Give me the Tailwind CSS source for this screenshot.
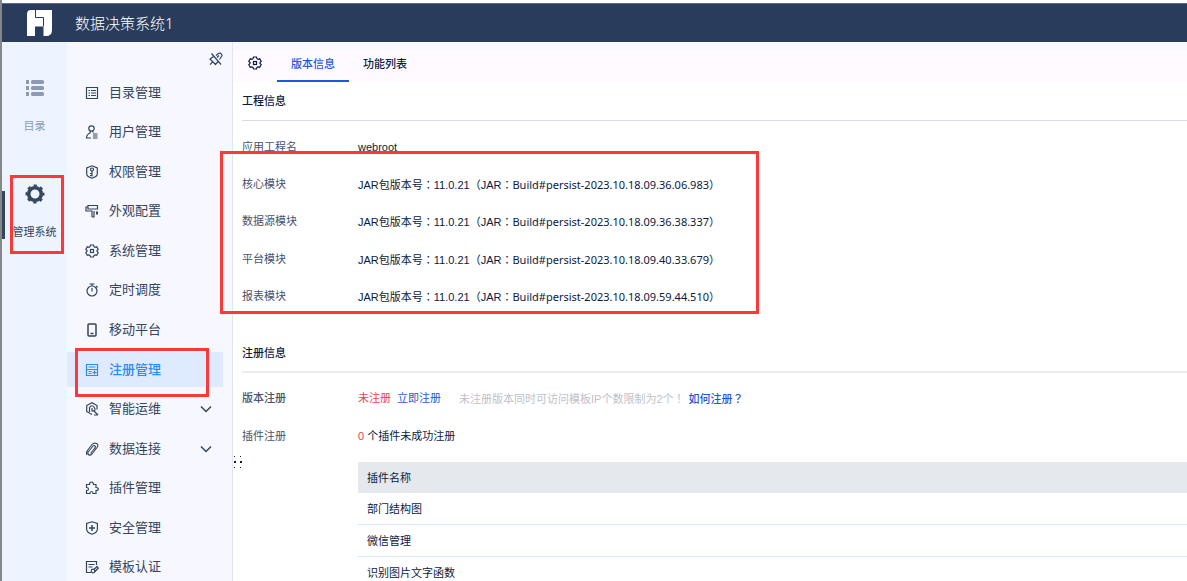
<!DOCTYPE html>
<html lang="zh-CN">
<head>
<meta charset="utf-8">
<meta name="viewport" content="width=device-width, initial-scale=1">
<title>数据决策系统</title>
<script src="https://cdn.jsdelivr.net/npm/@tailwindcss/browser@4"></script>
</head>
<body class="relative flex h-screen flex-col overflow-hidden border-l-2 border-[#85878b] bg-white font-['Liberation_Sans','Noto_Sans_CJK_SC',sans-serif] text-[11px] leading-4 text-[#0b1a40]">

<header class="mt-[3px] flex h-[39px] shrink-0 items-center gap-[21px] border-t border-[#5f6b80] bg-[#293c5b] pl-6 text-white">
  <svg class="h-7 w-7" viewBox="0 0 28 28" fill="#fff" aria-hidden="true">
    <path d="M5 1H9V9H17V17.500H5V27H1V5Q1 1 5 1Z"/><path d="M1 17H9V27H1Z"/><path d="M9 1H26V21Q26 27 20 27H17.500V8.500H9Z"/><path d="M9.500 1V8.500H17.500V17" fill="none" stroke="#293c5b"/>
  </svg>
  <h1 class="text-[15px] leading-5 font-light">数据决策系统<span class="font-['Noto_Sans']">1</span></h1>
</header>

<div class="flex min-h-0 flex-1">
  <nav aria-label="主导航" class="flex w-[65px] shrink-0 flex-col items-center bg-[#eef4ff] pt-9">
    <a href="#" class="flex flex-col items-center gap-5 text-[#8d9ab5]">
      <svg class="h-5 w-5" viewBox="0 0 20 20" fill="currentColor" aria-hidden="true"><path d="M1 2h3v4H1zM1 8h3v4H1zM1 14h3v4H1z"/><rect x="6" y="2" width="13" height="4" rx="1.500"/><rect x="6" y="8" width="13" height="4" rx="1.500"/><rect x="6" y="14" width="13" height="4" rx="1.500"/></svg>
      <span>目录</span>
    </a>
    <a href="#" aria-current="page" class="relative mt-[50px] flex w-full flex-col items-center gap-5 text-[#34475f]">
      <span class="absolute top-[7px] left-0 h-12 w-[3px] bg-[#34475f]"></span>
      <svg class="h-5 w-5" viewBox="0 0 20 20" aria-hidden="true"><circle cx="10" cy="10" r="6.300" fill="none" stroke="currentColor" stroke-width="3.600"/><circle cx="10" cy="10" r="8.500" fill="none" stroke="currentColor" stroke-width="2" stroke-dasharray="3.340 3.340" stroke-dashoffset="1.670"/></svg>
      <span>管理系统</span>
    </a>
  </nav>

  <aside class="flex w-[166px] shrink-0 flex-col border-r border-[#e2e4ef] bg-[#f7f7ff] text-[#33455c]">
    <button type="button" aria-label="取消固定" class="mt-[10px] mr-[9px] self-end">
      <svg class="h-[14px] w-[14px]" viewBox="0 0 14 14" fill="none" stroke="currentColor" stroke-width="1.200" aria-hidden="true"><path d="M2.500 1.500L12 12.500M7 3.500L9.500 1.500Q11 .5 12.300 1.800T12.500 4.500L10.500 7.500M4.500 4.500L1 7L6.500 12.500L9 9.500M3.500 10L1 12.700M10 3.500l-2 2"/></svg>
    </button>
    <nav aria-label="管理系统" class="mt-[9px] flex h-[510px] shrink-0 flex-col justify-between text-[13px]">
      <a href="#" class="mr-[9px] flex h-[35px] items-center gap-[10px] pl-[18px]"><svg class="h-[14px] w-[14px]" viewBox="0 0 14 14" fill="none" stroke="currentColor" stroke-width="1.200" aria-hidden="true"><path d="M1.500 1.500h11v11h-11zM3.500 4.500h1.500M6 4.500h5M3.500 7h1.500M6 7h5M3.500 9.500h1.500M6 9.500h5"/></svg>目录管理</a>
      <a href="#" class="mr-[9px] flex h-[35px] items-center gap-[10px] pl-[18px]"><svg class="h-[14px] w-[14px]" viewBox="0 0 14 14" fill="none" stroke="currentColor" stroke-width="1.200" aria-hidden="true"><circle cx="6.500" cy="3.500" r="2.700"/><path d="M5.500 6L5 8Q1.500 9.500 1.500 13H6M7.500 6L8.500 7.500M8 9h4.500M8 11h4.500M8 13h4.500"/></svg>用户管理</a>
      <a href="#" class="mr-[9px] flex h-[35px] items-center gap-[10px] pl-[18px]"><svg class="h-[14px] w-[14px]" viewBox="0 0 14 14" fill="none" stroke="currentColor" stroke-width="1.200" aria-hidden="true"><path d="M7 .8L12.300 3V9Q12.300 11.500 7 13.300Q1.700 11.500 1.700 9V3Z"/><circle cx="7" cy="4.500" r="1.500"/><path d="M7 6v5.500M7 8.500H5M7 10.500H5"/></svg>权限管理</a>
      <a href="#" class="mr-[9px] flex h-[35px] items-center gap-[10px] pl-[18px]"><svg class="h-[14px] w-[14px]" viewBox="0 0 14 14" fill="none" stroke="currentColor" stroke-width="1.200" aria-hidden="true"><path d="M3 1.500h9.500V5H3zM3 3H1v4h6v6M9 7v6H7"/><path d="M12 7.500v3" stroke-width="2"/></svg>外观配置</a>
      <a href="#" class="mr-[9px] flex h-[35px] items-center gap-[10px] pl-[18px]"><svg class="h-[14px] w-[14px]" viewBox="0 0 14 14" fill="none" stroke="currentColor" stroke-width="1.200" aria-hidden="true"><path d="M5.500 1h3l.5 1.700 1 .6 1.700-.5 1.500 2.600L12 6.500v1l1.200 1.200-1.500 2.500-1.700-.4-1 .6L8.500 13h-3L5 11.400l-1-.6-1.700.4L.8 8.700 2 7.500v-1L.8 5.400l1.500-2.600 1.700.5 1-.6z"/><rect x="5.500" y="5.500" width="3" height="3"/></svg>系统管理</a>
      <a href="#" class="mr-[9px] flex h-[35px] items-center gap-[10px] pl-[18px]"><svg class="h-[14px] w-[14px]" viewBox="0 0 14 14" fill="none" stroke="currentColor" stroke-width="1.200" aria-hidden="true"><circle cx="7" cy="8" r="5"/><path d="M4.500 1h5M7 1v2M7 5v3.500M11 3l1.500 1.500"/></svg>定时调度</a>
      <a href="#" class="mr-[9px] flex h-[35px] items-center gap-[10px] pl-[18px]"><svg class="h-[14px] w-[14px]" viewBox="0 0 14 14" fill="none" stroke="currentColor" stroke-width="1.500" aria-hidden="true"><rect x="3" y="1" width="8" height="12" rx="1"/><path d="M5.500 10.500h3"/></svg>移动平台</a>
      <a href="#" aria-current="page" class="mr-[9px] flex h-[35px] items-center gap-[10px] bg-[#deebff] pl-[18px] font-medium text-[#2b8cf5]"><svg class="h-[14px] w-[14px]" viewBox="0 0 14 14" fill="none" stroke="currentColor" stroke-width="1.200" aria-hidden="true"><path d="M1.500 1.500h11v11h-11zM3.500 4h7M1.500 6.500h11M3.500 8.500h3M3.500 10.500h3M7.500 9.500h4M9.500 7.500v4"/></svg>注册管理</a>
      <a href="#" class="mr-[9px] flex h-[35px] items-center gap-[10px] pl-[18px]"><svg class="h-[14px] w-[14px]" viewBox="0 0 14 14" fill="none" stroke="currentColor" stroke-width="1.200" aria-hidden="true"><path d="M12 7.500V3.500L7 .8L1.700 3.500V9.500L7 12.500M4.500 10V5.500Q7 2 9.300 5.500T7 9V6M9 9l4 4M9 13h4"/></svg>智能运维<svg class="mr-[11px] ml-auto h-3 w-3" viewBox="0 0 12 12" fill="none" stroke="currentColor" stroke-width="1.500" aria-hidden="true"><path d="M1 3.500l5 5 5-5"/></svg></a>
      <a href="#" class="mr-[9px] flex h-[35px] items-center gap-[10px] pl-[18px]"><svg class="h-[14px] w-[14px]" viewBox="0 0 14 14" fill="none" stroke="currentColor" stroke-width="1.100" aria-hidden="true"><path d="M2 9L7 2.500Q9 .3 11.500 1.500T12 5.500L7 12Q5 14 3.500 12.500T3.500 9.500L8 4Q9 3 10 4T9.500 6.500L5.500 11.500M2 9Q1 11 2 13"/></svg>数据连接<svg class="mr-[11px] ml-auto h-3 w-3" viewBox="0 0 12 12" fill="none" stroke="currentColor" stroke-width="1.500" aria-hidden="true"><path d="M1 3.500l5 5 5-5"/></svg></a>
      <a href="#" class="mr-[9px] flex h-[35px] items-center gap-[10px] pl-[18px]"><svg class="h-[14px] w-[14px]" viewBox="0 0 14 14" fill="none" stroke="currentColor" stroke-width="1.200" aria-hidden="true"><path d="M1.500 3.500H4.500Q4.500 1 6.500 1T8.500 3.500H11V6.500Q13.300 6.500 13.300 8T11 9.500V12.500H8Q8 10.500 6.500 10.500T5 12.500H1.500V9.500Q3.500 9.500 3.500 8T1.500 6.500Z"/></svg>插件管理</a>
      <a href="#" class="mr-[9px] flex h-[35px] items-center gap-[10px] pl-[18px]"><svg class="h-[14px] w-[14px]" viewBox="0 0 14 14" fill="none" stroke="currentColor" stroke-width="1.200" aria-hidden="true"><path d="M7 .8L12.400 2.500V8Q12.400 11.500 7 13.300Q1.600 11.500 1.600 8V2.500Z"/><path d="M4 7h6M7 4v6" stroke-width="1.500"/></svg>安全管理</a>
      <a href="#" class="mr-[9px] flex h-[35px] items-center gap-[10px] pl-[18px]"><svg class="h-[14px] w-[14px]" viewBox="0 0 14 14" fill="none" stroke="currentColor" stroke-width="1.200" aria-hidden="true"><path d="M6 12.500H1.500V1.500H11.500V5M3.500 4.500h6M3.500 7h4"/><circle cx="8" cy="11" r="1.800"/><path d="M9 9.500L12 6.500L13.300 8L9.500 12"/></svg>模板认证</a>
    </nav>
  </aside>

  <main class="relative flex min-w-0 flex-1 flex-col">
    <div class="flex h-10 shrink-0 items-stretch border-t-8 border-[#f8f8ff] bg-[#fefaff] pl-[15px]">
      <button type="button" aria-label="设置" class="mr-[15px] flex items-start pt-[6px]">
        <svg class="h-[14px] w-[14px]" viewBox="0 0 14 14" fill="none" stroke="currentColor" stroke-width="1.200" aria-hidden="true"><path d="M5.500 1h3l.5 1.700 1 .6 1.700-.5 1.500 2.600L12 6.500v1l1.200 1.200-1.500 2.500-1.700-.4-1 .6L8.500 13h-3L5 11.400l-1-.6-1.700.4L.8 8.700 2 7.500v-1L.8 5.400l1.500-2.600 1.700.5 1-.6z"/><rect x="5.500" y="5.500" width="3" height="3"/></svg>
      </button>
      <div role="tablist" class="flex">
        <button type="button" role="tab" aria-selected="true" class="flex w-[72px] items-start justify-center border-b-2 border-[#1f56dc] pt-[6px] font-medium text-[#1f56dc]">版本信息</button>
        <button type="button" role="tab" aria-selected="false" class="flex w-[72px] items-start justify-center pt-[6px] font-medium">功能列表</button>
      </div>
    </div>

    <section class="pt-[11px] pl-[9px]">
      <h2 class="border-b border-[#d9dae8] pb-[11px] font-medium">工程信息</h2>
      <dl class="mt-[18px] flex h-[166px] flex-col justify-between">
        <div class="flex"><dt class="w-[116px] text-[#44536f]">应用工程名</dt><dd>webroot</dd></div>
        <div class="flex"><dt class="w-[116px] text-[#44536f]">核心模块</dt><dd>JAR包版本号<span lang="zh-TW" class="font-['Noto_Sans_CJK_TC']">：</span>11.0.21<span lang="zh-TW" class="font-['Noto_Sans_CJK_TC']">（</span>JAR<span lang="zh-TW" class="font-['Noto_Sans_CJK_TC']">：</span><span class="font-['Noto_Sans']">Build#persist-2023.10.18.09.36.06.983</span><span lang="zh-TW" class="font-['Noto_Sans_CJK_TC']">）</span></dd></div>
        <div class="flex"><dt class="w-[116px] text-[#44536f]">数据源模块</dt><dd>JAR包版本号<span lang="zh-TW" class="font-['Noto_Sans_CJK_TC']">：</span>11.0.21<span lang="zh-TW" class="font-['Noto_Sans_CJK_TC']">（</span>JAR<span lang="zh-TW" class="font-['Noto_Sans_CJK_TC']">：</span><span class="font-['Noto_Sans']">Build#persist-2023.10.18.09.36.38.337</span><span lang="zh-TW" class="font-['Noto_Sans_CJK_TC']">）</span></dd></div>
        <div class="flex"><dt class="w-[116px] text-[#44536f]">平台模块</dt><dd>JAR包版本号<span lang="zh-TW" class="font-['Noto_Sans_CJK_TC']">：</span>11.0.21<span lang="zh-TW" class="font-['Noto_Sans_CJK_TC']">（</span>JAR<span lang="zh-TW" class="font-['Noto_Sans_CJK_TC']">：</span><span class="font-['Noto_Sans']">Build#persist-2023.10.18.09.40.33.679</span><span lang="zh-TW" class="font-['Noto_Sans_CJK_TC']">）</span></dd></div>
        <div class="flex"><dt class="w-[116px] text-[#44536f]">报表模块</dt><dd>JAR包版本号<span lang="zh-TW" class="font-['Noto_Sans_CJK_TC']">：</span>11.0.21<span lang="zh-TW" class="font-['Noto_Sans_CJK_TC']">（</span>JAR<span lang="zh-TW" class="font-['Noto_Sans_CJK_TC']">：</span><span class="font-['Noto_Sans']">Build#persist-2023.10.18.09.59.44.510</span><span lang="zh-TW" class="font-['Noto_Sans_CJK_TC']">）</span></dd></div>
      </dl>
    </section>

    <section class="pt-10 pl-[9px]">
      <h2 class="border-b-2 border-[#ebebf0] pb-[10px] font-medium">注册信息</h2>
      <dl class="mt-[17px] flex flex-col gap-[21px]">
        <div class="flex">
          <dt class="w-[116px] font-medium text-[#44536f]">版本注册</dt>
          <dd class="flex"><span class="text-[#f0404f]">未注册</span><a href="#" class="ml-[6px] text-[#1f56dc]">立即注册</a><span class="ml-[18px] text-[#bfc1c8]">未注册版本同时可访问模板IP个数限制为2个<span lang="zh-TW" class="font-['Noto_Sans_CJK_TC']">！</span></span><a href="#" class="ml-1 font-medium text-[#1f56dc]">如何注册<span lang="zh-TW" class="font-['Noto_Sans_CJK_TC']">？</span></a></dd>
        </div>
        <div class="flex"><dt class="w-[116px] text-[#44536f]">插件注册</dt><dd><span class="text-[#f0404f]">0</span> 个插件未成功注册</dd></div>
      </dl>
      <div class="mt-[18px] pl-[116px]">
        <table class="w-full border-separate border-spacing-0 text-left">
          <thead><tr><th scope="col" class="h-[31px] bg-[#e5e9ee] pl-[9px] font-normal">插件名称</th></tr></thead>
          <tbody>
            <tr><td class="h-8 border-b border-[#dce8ff] pl-[9px]">部门结构图</td></tr>
            <tr><td class="h-8 border-b border-[#dce8ff] pl-[9px]">微信管理</td></tr>
            <tr><td class="h-8 pl-[9px]">识别图片文字函数</td></tr>
          </tbody>
        </table>
      </div>
    </section>
    <svg class="absolute top-[414px] left-0 h-3 w-3" viewBox="0 0 12 12" fill="#0b1a40" aria-hidden="true"><path d="M1 0h1v1H1zM7 0h1v1H7zM1 5h2v2H1zM7 5h2v2H7zM1 11h1v1H1zM7 11h1v1H7z"/></svg>
  </main>
</div>

<div class="pointer-events-none absolute top-[175px] left-2 h-[79px] w-[54px] border-3 border-[#fc3838]"></div>
<div class="pointer-events-none absolute top-[348px] left-[73px] h-[49px] w-[134px] border-3 border-[#fc3838]"></div>
<div class="pointer-events-none absolute top-[151px] left-[218px] h-[163px] w-[539px] border-3 border-[#fc3838]"></div>
</body>
</html>
